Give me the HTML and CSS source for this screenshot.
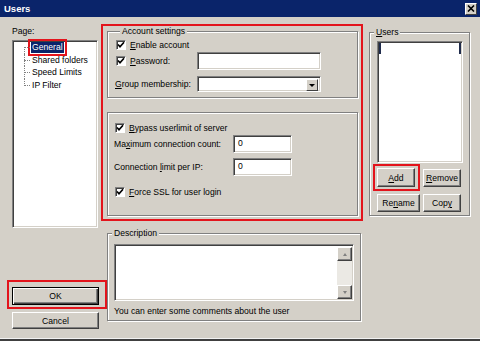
FILE: index.html
```html
<!DOCTYPE html>
<html lang="en">
<head>
    <meta charset="UTF-8">
    <title>Users</title>
    <link rel="stylesheet" href="styles.css">
</head>
<body>
    <div class="window">
        <div class="titlebar">
            <span class="title">Users</span>
            <span class="close">
                <svg width="8" height="7" viewBox="0 0 8 7"><path d="M1 0.5 L7 6.5 M7 0.5 L1 6.5" stroke="#000" stroke-width="1.6"/></svg>
            </span>
        </div>
        <div class="client">
            <div class="top">
                <div class="pages">
                    <div class="label">Page:</div>
                    <div class="tree sunken">
                        <ul>
                            <li><span class="sel">General</span></li>
                            <li>Shared folders</li>
                            <li>Speed Limits</li>
                            <li>IP Filter</li>
                        </ul>
                    </div>
                </div>

                <div class="mark settings">
                    <fieldset class="group account">
                        <legend>Account settings</legend>
                        <div class="row check-row first">
                            <span class="box"><svg width="8" height="8" viewBox="0 0 8 8"><path d="M1 3.5 L3 5.8 L7 1.2" stroke="#000" stroke-width="1.7" fill="none"/></svg></span>
                            <span><u>E</u>nable account</span>
                        </div>
                        <div class="row field-row pw">
                            <div class="check-row">
                                <span class="box"><svg width="8" height="8" viewBox="0 0 8 8"><path d="M1 3.5 L3 5.8 L7 1.2" stroke="#000" stroke-width="1.7" fill="none"/></svg></span>
                                <span><u>P</u>assword:</span>
                            </div>
                            <span class="field"></span>
                        </div>
                        <div class="row field-row grp">
                            <span class="cap"><u>G</u>roup membership:</span>
                            <span class="field combo"><span class="drop"></span></span>
                        </div>
                    </fieldset>

                    <fieldset class="group limits">
                        <div class="row check-row bypass">
                            <span class="box"><svg width="8" height="8" viewBox="0 0 8 8"><path d="M1 3.5 L3 5.8 L7 1.2" stroke="#000" stroke-width="1.7" fill="none"/></svg></span>
                            <span><u>B</u>ypass userlimit of server</span>
                        </div>
                        <div class="row num-row max">
                            <span>Ma<u>x</u>imum connection count:</span>
                            <span class="field num">0</span>
                        </div>
                        <div class="row num-row perip">
                            <span>Connection <u>l</u>imit per IP:</span>
                            <span class="field num">0</span>
                        </div>
                        <div class="row check-row force">
                            <span class="box"><svg width="8" height="8" viewBox="0 0 8 8"><path d="M1 3.5 L3 5.8 L7 1.2" stroke="#000" stroke-width="1.7" fill="none"/></svg></span>
                            <span><u>F</u>orce SSL for user login</span>
                        </div>
                    </fieldset>
                </div>

                <fieldset class="group users">
                    <legend><u>U</u>sers</legend>
                    <div class="list sunken"><div class="focus"></div></div>
                    <div class="user-buttons">
                        <div class="mark add-mark"><span class="btn"><u>A</u>dd</span></div>
                        <span class="btn remove"><u>R</u>emove</span>
                        <span class="btn rename">Re<u>n</u>ame</span>
                        <span class="btn">Cop<u>y</u></span>
                    </div>
                </fieldset>
            </div>

            <div class="bottom">
                <div class="actions">
                    <div class="mark ok-mark"><span class="btn default">OK</span></div>
                    <span class="btn cancel">Cancel</span>
                </div>
                <fieldset class="group desc">
                    <legend>Description</legend>
                    <div class="memo sunken">
                        <div class="memo-text"></div>
                        <div class="scroll">
                            <span class="btn arrow up"></span>
                            <span class="track"></span>
                            <span class="btn arrow down"></span>
                        </div>
                    </div>
                    <p class="hint">You can enter some comments about the user</p>
                </fieldset>
            </div>
        </div>
    </div>
</body>
</html>
```

FILE: styles.css
```css
* {
    box-sizing: border-box;
}
body {
    margin: 0;
    background: #d4d0c8;
    font-family: "Liberation Sans", Arial, sans-serif;
    font-size: 8.6px;
    color: #000;
}
u {
    text-decoration: underline;
    text-underline-offset: 1px;
}
.window {
    width: 480px;
    height: 341px;
    display: flex;
    flex-direction: column;
    border-bottom: 2px solid #404040;
}
.titlebar {
    height: 17px;
    flex: none;
    background: #0a246a;
    color: #fff;
    display: flex;
    align-items: center;
    justify-content: space-between;
    padding: 0 3px 0 4px;
}
.title {
    font-weight: bold;
    font-size: 9.5px;
}
.close {
    width: 12px;
    height: 12px;
    background: #d4d0c8;
    border: 1px solid;
    border-color: #fff #404040 #404040 #fff;
    display: flex;
    align-items: center;
    justify-content: center;
}
.client {
    flex: 1;
    display: flex;
    flex-direction: column;
    border-bottom: 1px solid #f2f2f2;
}

/* shared bits */
.sunken {
    background: #fff;
    border: 1px solid;
    border-color: #808080 #fff #fff #808080;
    box-shadow: inset 1px 1px 0 #404040, inset -1px -1px 0 #d4d0c8;
}
.group {
    margin: 0;
    padding: 0;
    min-width: 0;
    border: 1px solid #808080;
    box-shadow: 1px 1px 0 #fff, inset 1px 1px 0 #fff;
}
.group legend {
    padding: 0 2px;
    margin-left: 4px;
    height: 10px;
    line-height: 10px;
    background: #d4d0c8;
}
.mark {
    border: 2px solid #e3141c;
}
.btn {
    display: flex;
    align-items: center;
    justify-content: center;
    height: 18px;
    background: #d4d0c8;
    border: 1px solid;
    border-color: #fff #404040 #404040 #fff;
    box-shadow: inset -1px -1px 0 #808080;
}
.box {
    width: 10px;
    height: 10px;
    flex: none;
    background: #fff;
    border: 1px solid;
    border-color: #808080 #fff #fff #808080;
    box-shadow: inset 1px 1px 0 #404040;
    display: flex;
    align-items: center;
    justify-content: center;
}
.field {
    display: block;
    height: 18px;
    background: #fff;
    border: 1px solid;
    border-color: #808080 #fff #fff #808080;
    box-shadow: inset 1px 1px 0 #404040, inset -1px -1px 0 #d4d0c8;
}

/* top area */
.top {
    display: flex;
    align-items: flex-start;
    height: 211px;
    flex: none;
}
.pages {
    margin: 9px 0 0 12px;
    width: 86px;
}
.pages .label {
    height: 10px;
    line-height: 10px;
}
.tree {
    margin-top: 4px;
    height: 188px;
}
.tree ul {
    list-style: none;
    margin: 0;
    padding: 0 0 0 19px;
}
.tree li {
    position: relative;
    height: 12.5px;
    display: flex;
    align-items: center;
}
.tree li::before {
    content: "";
    position: absolute;
    left: -8px;
    top: 0;
    bottom: 0;
    border-left: 1px dotted #808080;
}
.tree li:first-child::before {
    top: 6px;
}
.tree li:last-child::before {
    bottom: auto;
    height: 7px;
}
.tree li::after {
    content: "";
    position: absolute;
    left: -8px;
    top: 6px;
    width: 6px;
    border-top: 1px dotted #808080;
}
.sel {
    margin-left: -1px;
    padding: 0 1px;
    height: 11px;
    line-height: 11px;
    background: #0a246a;
    color: #fff;
    outline: 2px solid #e3141c;
    outline-offset: 1px;
}

.settings {
    margin: 7px 0 0 3px;
    width: 262px;
    padding: 0 3px 3px 4px;
}
.row {
    display: flex;
    align-items: center;
}
.check-row {
    display: flex;
    align-items: center;
    gap: 4px;
}
.account {
    padding: 0 0 5px 8px;
}
.account .first {
    margin-top: 3px;
    height: 12px;
}
.field-row {
    display: grid;
    grid-template-columns: 81px 124px;
    align-items: center;
}
.pw {
    margin-top: 1px;
    height: 18px;
}
.grp {
    margin-top: 6px;
    height: 16px;
}
.grp .cap {
    margin-left: -1px;
}
.combo {
    height: 16px;
    display: flex;
    justify-content: flex-end;
    padding: 2px;
}
.drop {
    width: 12px;
    height: 12px;
    background: #d4d0c8;
    border: 1px solid;
    border-color: #fff #404040 #404040 #fff;
    display: flex;
    align-items: center;
    justify-content: center;
}
.drop::after {
    content: "";
    border-top: 3px solid #000;
    border-left: 3px solid transparent;
    border-right: 3px solid transparent;
}

.limits {
    margin-top: 14px;
    padding: 9px 0 17px 6px;
}
.bypass {
    height: 12px;
    margin-left: 1px;
}
.num-row {
    display: grid;
    grid-template-columns: 119px 59px;
    align-items: center;
    height: 18px;
}
.max {
    margin-top: 1px;
}
.perip {
    margin-top: 5px;
}
.num {
    padding: 2px 0 0 4px;
    line-height: 10px;
}
.force {
    margin-top: 10px;
    height: 12px;
    margin-left: 1px;
}

.users {
    margin: 10px 0 0 6px;
    width: 101px;
    padding-bottom: 3px;
}
.list {
    margin: 4px 0 0 7px;
    width: 86px;
    height: 122px;
    padding: 1px 1px 0 1px;
}
.focus {
    height: 11px;
    border-left: 2px solid #202c4c;
    border-right: 2px solid #202c4c;
}
.user-buttons {
    display: grid;
    grid-template-columns: 47px 38px;
    column-gap: 3px;
    row-gap: 3px;
    margin: 1px 0 0 3px;
}
.add-mark {
    padding: 2px 3px 2px 2px;
}
.add-mark .btn {
    height: 19px;
}
.remove {
    align-self: center;
}
.rename {
    margin-left: 4px;
}

/* bottom area */
.bottom {
    display: flex;
    align-items: flex-start;
    flex: 1;
}
.actions {
    margin: 52px 0 0 7px;
    width: 100px;
}
.ok-mark {
    padding: 5px 6px 2px 3px;
}
.default {
    width: 87px;
    border: 1px solid #000;
    box-shadow: inset 1px 1px 0 #fff, inset -1px -1px 0 #404040, inset -2px -2px 0 #808080;
}
.cancel {
    margin: 3px 0 0 5px;
    width: 87px;
    height: 17px;
}
.desc {
    width: 254px;
    padding-bottom: 4px;
}
.memo {
    margin: 6px 0 0 6px;
    width: 240px;
    height: 57px;
    display: flex;
    padding: 2px 1px 1px 2px;
}
.memo-text {
    flex: 1;
}
.scroll {
    width: 15px;
    display: flex;
    flex-direction: column;
}
.arrow {
    height: 14px;
    flex: none;
}
.arrow::after {
    content: "";
    border-left: 2.5px solid transparent;
    border-right: 2.5px solid transparent;
}
.up::after {
    border-bottom: 3px solid #808080;
}
.down::after {
    border-top: 3px solid #808080;
}
.track {
    flex: 1;
    background: #ebe9e4;
}
.hint {
    margin: 5px 0 0 6px;
    height: 10px;
    line-height: 10px;
}
```
